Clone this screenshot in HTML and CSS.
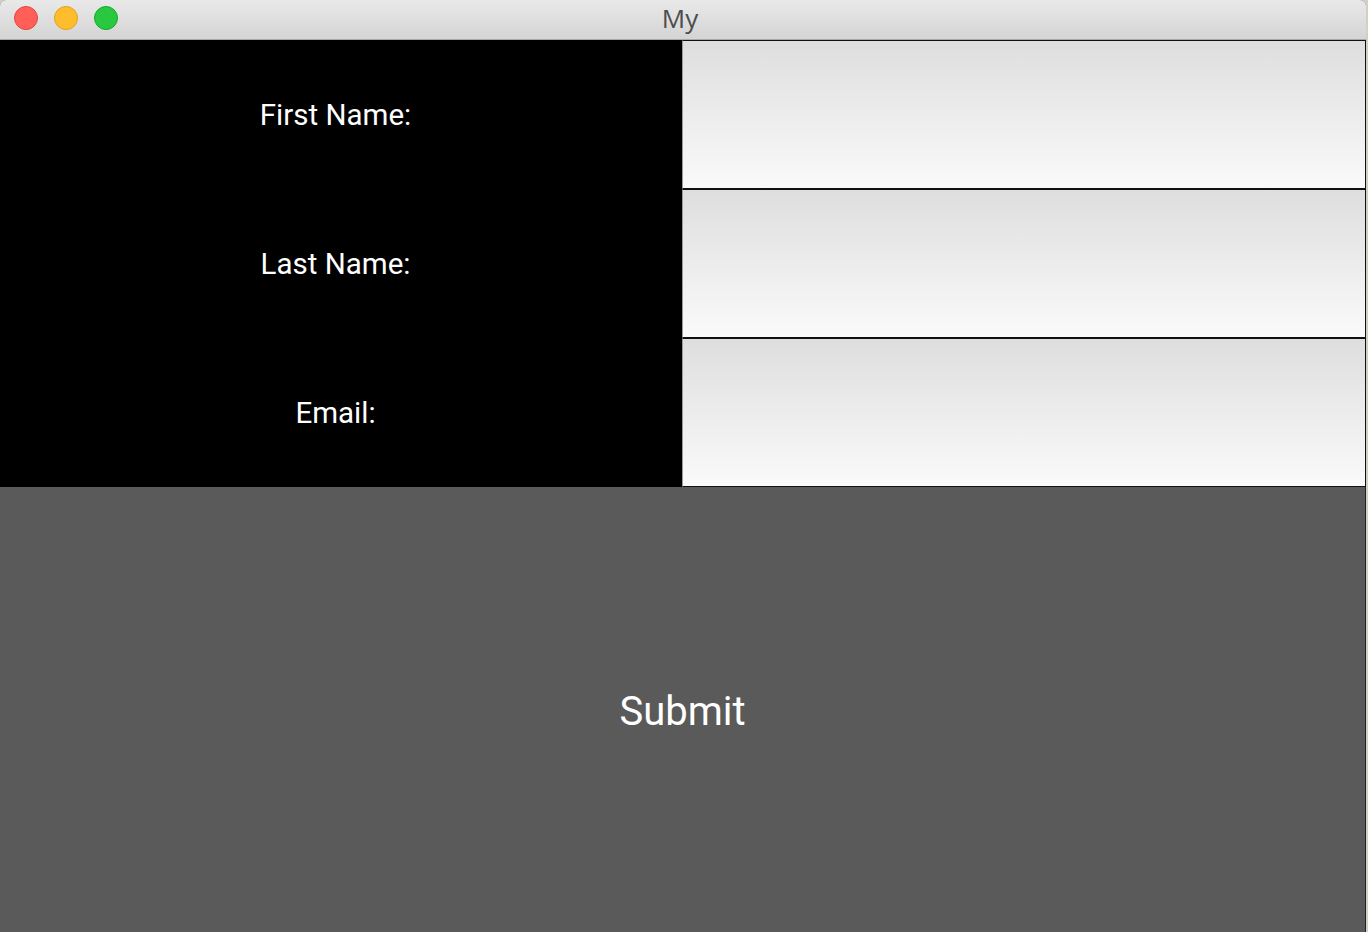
FILE: index.html
```html
<!DOCTYPE html>
<html>
<head>
<meta charset="utf-8">
<title>My</title>
<link rel="stylesheet" href="styles.css">
</head>
<body>
<div class="window">
  <div class="titlebar">
    <div class="lights">
      <span class="light red"></span>
      <span class="light yellow"></span>
      <span class="light green"></span>
    </div>
    <div class="title">My</div>
  </div>
  <div class="form">
    <div class="labels">
      <div class="label">First Name:</div>
      <div class="label">Last Name:</div>
      <div class="label">Email:</div>
    </div>
    <div class="fields">
      <input class="field" type="text">
      <input class="field" type="text">
      <input class="field" type="text">
    </div>
  </div>
  <button class="submit">Submit</button>
</div>
</body>
</html>
```
FILE: styles.css
```css
html, body {
  margin: 0;
  padding: 0;
}
body {
  background: #d3cfc6;
  width: 1368px;
  height: 932px;
  overflow: hidden;
  font-family: Roboto, "Liberation Sans", sans-serif;
}
.window {
  width: 1366px;
  height: 932px;
  display: flex;
  flex-direction: column;
  border-radius: 6px 6px 0 0;
  overflow: hidden;
  background: #5a5a5a;
}
.titlebar {
  height: 39px;
  flex: none;
  border-bottom: 1px solid #a8a8a8;
  background: linear-gradient(#e9e9e9, #d4d4d4);
  display: flex;
  align-items: center;
  position: relative;
}
.lights {
  display: flex;
  gap: 16px;
  padding-left: 14px;
  margin-top: -3px;
}
.light {
  width: 22px;
  height: 22px;
  border-radius: 50%;
  border: 1px solid;
  display: block;
}
.red { background: #ff5f57; border-color: #e2463f; }
.yellow { background: #ffbd2e; border-color: #e1a116; }
.green { background: #28c940; border-color: #17a82a; }
.title {
  position: absolute;
  left: 0;
  right: 6px;
  top: 3px;
  text-align: center;
  font-family: "Open Sans", "DejaVu Sans", sans-serif;
  font-size: 26px;
  line-height: 30px;
  color: #4d4d4d;
}
.form {
  display: grid;
  grid-template-columns: 682px 684px;
  height: 447px;
  flex: none;
}
.labels {
  background: #000;
  display: grid;
  grid-template-rows: 148px 149px 150px;
  padding-right: 11px;
}
.label {
  display: flex;
  align-items: center;
  justify-content: center;
  color: #fff;
  font-size: 29.5px;
  padding-top: 1px;
}
.label:nth-child(2) {
  padding-top: 2px;
}
.fields {
  display: flex;
  flex-direction: column;
}
.field {
  box-sizing: border-box;
  height: 149px;
  width: 684px;
  margin: 0;
  border: 1px solid #111;
  border-left-color: #9a9a9a;
  background: linear-gradient(#dedede, #fafafa);
  outline: none;
  padding: 0;
}
.submit {
  flex: 1;
  margin: 0;
  border: 0;
  border-right: 1px solid #222;
  background: #5a5a5a;
  color: #fff;
  font-family: Roboto, "Liberation Sans", sans-serif;
  font-size: 40px;
  padding: 4px 0 0 0;
  width: 1366px;
}
```
